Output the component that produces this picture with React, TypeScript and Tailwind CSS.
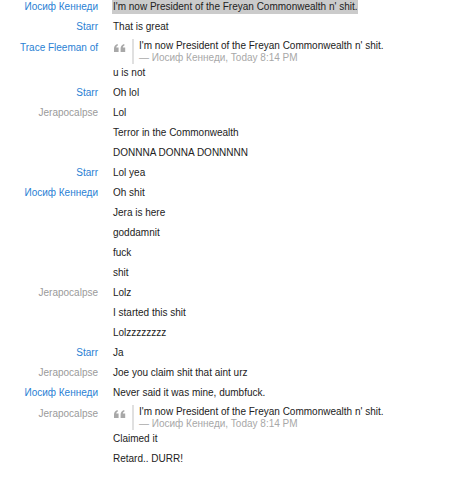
import React from 'react';

type Msg =
  | { kind: 'text'; name?: string; tone?: 'blue' | 'gray'; text: string; highlight?: boolean }
  | { kind: 'quote'; name?: string; tone?: 'blue' | 'gray' };

const QUOTE_TEXT = "I'm now President of the Freyan Commonwealth n' shit.";
const QUOTE_BY = '— Иосиф Кеннеди, Today 8:14 PM';

const MESSAGES: Msg[] = [
  { kind: 'text', name: 'Иосиф Кеннеди', tone: 'blue', text: QUOTE_TEXT, highlight: true },
  { kind: 'text', name: 'Starr', tone: 'blue', text: 'That is great' },
  { kind: 'quote', name: 'Trace Fleeman of', tone: 'blue' },
  { kind: 'text', text: 'u is not' },
  { kind: 'text', name: 'Starr', tone: 'blue', text: 'Oh lol' },
  { kind: 'text', name: 'Jerapocalpse', tone: 'gray', text: 'Lol' },
  { kind: 'text', text: 'Terror in the Commonwealth' },
  { kind: 'text', text: 'DONNNA DONNA DONNNNN' },
  { kind: 'text', name: 'Starr', tone: 'blue', text: 'Lol yea' },
  { kind: 'text', name: 'Иосиф Кеннеди', tone: 'blue', text: 'Oh shit' },
  { kind: 'text', text: 'Jera is here' },
  { kind: 'text', text: 'goddamnit' },
  { kind: 'text', text: 'fuck' },
  { kind: 'text', text: 'shit' },
  { kind: 'text', name: 'Jerapocalpse', tone: 'gray', text: 'Lolz' },
  { kind: 'text', text: 'I started this shit' },
  { kind: 'text', text: 'Lolzzzzzzzz' },
  { kind: 'text', name: 'Starr', tone: 'blue', text: 'Ja' },
  { kind: 'text', name: 'Jerapocalpse', tone: 'gray', text: 'Joe you claim shit that aint urz' },
  { kind: 'text', name: 'Иосиф Кеннеди', tone: 'blue', text: 'Never said it was mine, dumbfuck.' },
  { kind: 'quote', name: 'Jerapocalpse', tone: 'gray' },
  { kind: 'text', text: 'Claimed it' },
  { kind: 'text', text: 'Retard.. DURR!' },
];

const Name = ({ name, tone }: { name?: string; tone?: 'blue' | 'gray' }) => (
  <div
    className={`w-[98px] shrink-0 text-right whitespace-nowrap ${tone === 'gray' ? 'text-[#9a9a9a]' : 'text-[#2a7fd4]'}`}
  >
    {name}
  </div>
);

// the little double-quote glyph shown before quoted posts
const QuoteMark = () => (
  <svg width="12" height="8" viewBox="0 0 12 8" className="mt-[5px] ml-[1px]">
    <path d="M0 8V4.5Q0 1 3.5 0L4 1.2Q2.3 2 2.2 3.4H4.6V8Z" fill="#a8a8a8" />
    <path d="M6.6 8V4.5Q6.6 1 10.1 0L10.6 1.2Q8.9 2 8.8 3.4H11.2V8Z" fill="#a8a8a8" />
  </svg>
);

export default function App() {
  return (
    <div
      className="w-[475px] h-[480px] overflow-hidden bg-white text-[10px] text-[#222]"
      style={{ fontFamily: '"Liberation Sans", Arial, sans-serif' }}
    >
      <div className="flex flex-col -mt-[4px]">
        {MESSAGES.map((m, i) =>
          m.kind === 'text' ? (
            <div key={i} className="flex items-center h-[20px] gap-[15px]">
              <Name name={m.name} tone={m.tone} />
              <div className={`whitespace-nowrap px-[1px] -ml-[1px] leading-[15px] ${m.highlight ? 'bg-[#cbcbcb]' : ''}`}>{m.text}</div>
            </div>
          ) : (
            <div key={i} className="flex h-[26px] gap-[15px]">
              <div className="pt-[4px] flex">
                <Name name={m.name} tone={m.tone} />
              </div>
              <div className="flex pt-[3px]">
                <div className="w-[19px]">
                  <QuoteMark />
                </div>
                <div className="border-l-2 border-[#e0e0e0] pl-[5px] flex flex-col leading-[12px] h-[25px] pt-[1px]">
                  <div className="whitespace-nowrap">{QUOTE_TEXT}</div>
                  <div className="whitespace-nowrap text-[#a8a8a8]">{QUOTE_BY}</div>
                </div>
              </div>
            </div>
          )
        )}
      </div>
    </div>
  );
}
